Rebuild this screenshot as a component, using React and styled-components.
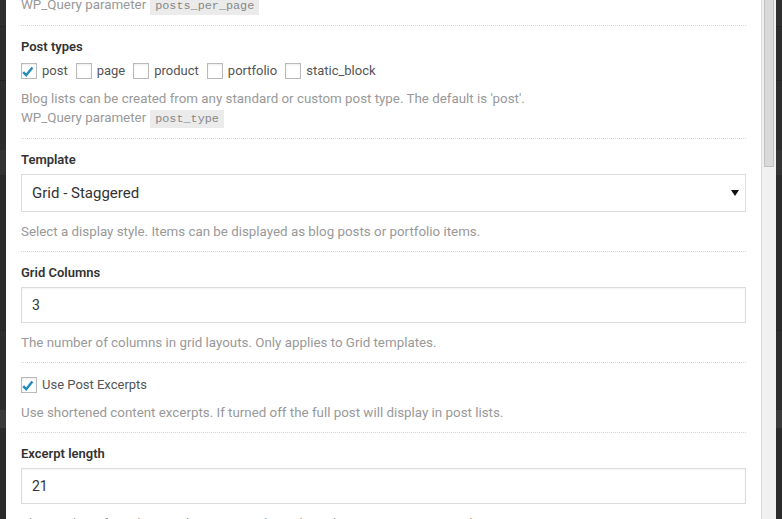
import React from "react";
import styled, { createGlobalStyle } from "styled-components";

const GlobalStyle = createGlobalStyle`
  html, body { margin: 0; padding: 0; }
  body {
    overflow: hidden;
    background: #2c2c2c;
    font-family: Roboto, "Noto Sans", "Liberation Sans", sans-serif;
  }
  * { box-sizing: border-box; }
`;

const Frame = styled.div`
  display: flex;
  width: 782px;
  height: 519px;
  overflow: hidden;
`;

const DarkEdge = styled.div`
  width: 6px;
  flex: none;
  background: linear-gradient(
    to bottom,
    #2f2f2f 0 26px, #262626 26px 27px, #2d2d2d 27px 80px, #252525 80px 81px,
    #2d2d2d 81px 150px, #333 150px 175px, #2b2b2b 175px 330px, #262626 330px 331px,
    #2d2d2d 331px 410px, #3a3a3a 410px 428px, #2b2b2b 428px
  );
`;

const Panel = styled.div`
  flex: 1;
  background: #fff;
  overflow: hidden;
`;

const Content = styled.div`
  margin-top: -5px;
  padding: 0 15px;
`;

const Section = styled.div`
  padding: ${(p) => (p.$first ? "0" : p.$check ? "12px" : "11px")} 0
    ${(p) => (p.$roomy ? "11px" : "10px")};
  border-bottom: ${(p) => (p.$last ? "none" : "1px dotted #d4d4d4")};
`;

const Label = styled.div`
  font-size: 13px;
  line-height: 20px;
  font-weight: 600;
  color: #333;
  margin-bottom: 4px;
`;

const Help = styled.p`
  margin: ${(p) => (p.$flush ? "0" : p.$afterCheck ? "8px 0 0" : "10px 0 0")};
  font-size: 13.35px;
  line-height: 19px;
  color: #999;
`;

const Code = styled.code`
  font-family: "Liberation Mono", "DejaVu Sans Mono", monospace;
  font-size: 11.8px;
  line-height: 12px;
  color: #888;
  background: #ebebeb;
  padding: 2px 5px;
  margin-left: 4px;
`;

const CheckRow = styled.div`
  display: flex;
  align-items: center;
  height: 20px;
`;

const CheckItem = styled.label`
  display: inline-flex;
  align-items: center;
  gap: 5px;
  margin-right: 8px;
  font-size: 13px;
  line-height: 20px;
  color: #555;
`;

const Box = styled.span`
  width: 16px;
  height: 16px;
  flex: none;
  display: inline-flex;
  align-items: center;
  justify-content: center;
  border: 1px solid #b9b9b9;
  background: #fff;
  box-shadow: inset 0 1px 2px rgba(0, 0, 0, 0.08);
`;

const SelectWrap = styled.div`
  position: relative;
`;

const Select = styled.select`
  display: block;
  width: 100%;
  height: 38px;
  appearance: none;
  border: 1px solid #dcdcdc;
  background: #fff;
  padding: 0 10px;
  font-family: Roboto, "Noto Sans", sans-serif;
  font-size: 15px;
  color: #333;
  outline: none;
`;

const Arrow = styled.svg`
  position: absolute;
  right: 7px;
  top: 16px;
  pointer-events: none;
`;

const Input = styled.input`
  display: block;
  width: 100%;
  height: 36px;
  border: 1px solid #dcdcdc;
  background: #fff;
  box-shadow: inset 0 1px 2px rgba(0, 0, 0, 0.05);
  padding: 0 10px;
  font-family: Roboto, "Noto Sans", sans-serif;
  font-size: 14px;
  color: #333;
  outline: none;
`;

const Track = styled.div`
  width: 15px;
  flex: none;
  background: #f0f0f0;
  border-left: 1px solid #dcdcdc;
  display: flex;
  flex-direction: column;
`;

const Thumb = styled.div`
  width: 10px;
  height: 167px;
  margin-left: 2px;
  background: #d9d9d9;
  border: 1px solid #c2c2c2;
  border-top: none;
`;

const Check = ({ checked }) => (
  <Box>
    {checked && (
      <svg width="14" height="14" viewBox="0 0 14 14" style={{ marginLeft: -3, marginTop: 1 }}>
        <path d="M2.2 7.2 L5.2 10.2 L11.4 2.6" fill="none" stroke="#1e8cbe" strokeWidth="2.4" />
      </svg>
    )}
  </Box>
);

const postTypes = [
  { name: "post", checked: true },
  { name: "page" },
  { name: "product" },
  { name: "portfolio" },
  { name: "static_block" },
];

export default function App() {
  return (
    <>
      <GlobalStyle />
      <Frame>
        <DarkEdge />
        <Panel>
          <Content>
            <Section $first $roomy>
              <Help $flush>
                WP_Query parameter<Code>posts_per_page</Code>
              </Help>
            </Section>

            <Section $roomy>
              <Label>Post types</Label>
              <CheckRow>
                {postTypes.map((t) => (
                  <CheckItem key={t.name}>
                    <Check checked={t.checked} />
                    {t.name}
                  </CheckItem>
                ))}
              </CheckRow>
              <Help $afterCheck>
                Blog lists can be created from any standard or custom post type. The default is 'post'.
                <br />
                WP_Query parameter<Code>post_type</Code>
              </Help>
            </Section>

            <Section>
              <Label>Template</Label>
              <SelectWrap>
                <Select defaultValue="grid-staggered">
                  <option value="grid-staggered">Grid - Staggered</option>
                </Select>
                <Arrow width="8" height="6" viewBox="0 0 8 6">
                  <path d="M0 0 H8 L4 6 Z" fill="#111" />
                </Arrow>
              </SelectWrap>
              <Help>Select a display style. Items can be displayed as blog posts or portfolio items.</Help>
            </Section>

            <Section>
              <Label>Grid Columns</Label>
              <Input readOnly value="3" />
              <Help>The number of columns in grid layouts. Only applies to Grid templates.</Help>
            </Section>

            <Section $check>
              <CheckRow>
                <CheckItem>
                  <Check checked />
                  Use Post Excerpts
                </CheckItem>
              </CheckRow>
              <Help $afterCheck>
                Use shortened content excerpts. If turned off the full post will display in post lists.
              </Help>
            </Section>

            <Section $last>
              <Label>Excerpt length</Label>
              <Input readOnly value="21" />
              <Help>The number of words in each excerpt. Only applies when excerpts are turned on.</Help>
            </Section>
          </Content>
        </Panel>
        <Track>
          <Thumb />
        </Track>
        <DarkEdge />
      </Frame>
    </>
  );
}
